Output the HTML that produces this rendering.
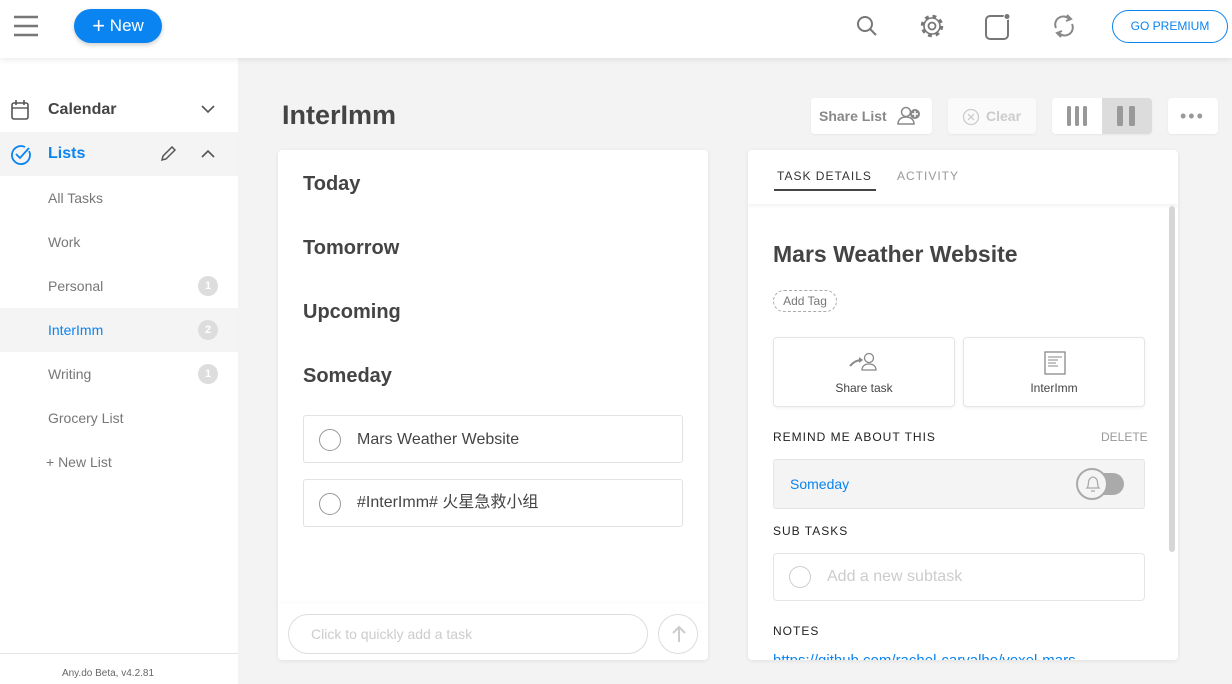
<!DOCTYPE html>
<html><head><meta charset="utf-8"><style>
*{box-sizing:border-box;margin:0;padding:0}
body{width:1232px;height:684px;overflow:hidden;background:#f3f3f3;font-family:"Liberation Sans","Noto Sans CJK SC",sans-serif;position:relative;color:#444}
.a{position:absolute}
.top{left:0;top:0;width:1232px;height:58px;background:#fff;box-shadow:0 2px 6px rgba(0,0,0,.08);z-index:2}
.side{left:0;top:58px;width:238px;height:626px;background:#fff}
.item{position:absolute;left:48px;font-size:14px;color:#777}
.badge{position:absolute;left:198px;width:20px;height:20px;border-radius:50%;background:#ddd;color:#fff;font-size:11px;text-align:center;line-height:20px;font-weight:bold}
.card{background:#fff;border-radius:4px;box-shadow:0 1px 4px rgba(0,0,0,.08)}
.sec{position:absolute;left:25px;font-size:20px;font-weight:bold;color:#444}
.task{position:absolute;left:25px;width:380px;height:48px;border:1px solid #e2e2e2;border-radius:3px;font-size:16px;color:#444}
.task i{position:absolute;left:15px;top:13px;width:22px;height:22px;border:1px solid #999;border-radius:50%}
.task span{position:absolute;left:53px;top:14px;line-height:20px}
.lbl{position:absolute;font-size:12px;letter-spacing:1px;color:#222}
.btn{position:absolute;background:#fff;border-radius:4px;box-shadow:0 1px 2px rgba(0,0,0,.05)}
</style></head><body>
<div class="a top">
 <svg class="a" style="left:13px;top:15px" width="26" height="22"><g stroke="#777" stroke-width="2.5"><line x1="1" y1="2" x2="25" y2="2"/><line x1="1" y1="11" x2="25" y2="11"/><line x1="1" y1="20" x2="25" y2="20"/></g></svg>
 <div class="a" style="left:74px;top:9px;width:88px;height:34px;border-radius:17px;background:#0a84f0;color:#fff;font-size:17px;line-height:34px;text-align:center;box-shadow:0 2px 5px rgba(0,0,0,.2)"><span style="font-size:22px;vertical-align:-2px">+</span> New</div>
 <svg class="a" style="left:856px;top:15px" width="22" height="22"><circle cx="9" cy="9" r="7" fill="none" stroke="#777" stroke-width="2"/><line x1="14" y1="14" x2="20" y2="20" stroke="#777" stroke-width="2"/></svg>
 <svg class="a" style="left:919px;top:13px" width="26" height="26" viewBox="0 0 26 26"><circle cx="13" cy="13" r="9.5" fill="none" stroke="#777" stroke-width="3.5" stroke-dasharray="3.7 3.8"/><circle cx="13" cy="13" r="8" fill="#fff" stroke="#777" stroke-width="1.6"/><circle cx="13" cy="13" r="3.5" fill="none" stroke="#777" stroke-width="1.8"/></svg>
 <svg class="a" style="left:984px;top:13px" width="28" height="28"><rect x="2" y="3" width="22" height="23" rx="4" fill="none" stroke="#777" stroke-width="2"/><circle cx="23" cy="3.5" r="3.5" fill="#fff"/><circle cx="23" cy="3.5" r="2.5" fill="#777"/></svg>
 <svg class="a" style="left:1052px;top:13px" width="24" height="26" viewBox="0 0 24 26"><path d="M4 15A8 8 0 0 1 17 6" fill="none" stroke="#888" stroke-width="2"/><path d="M15 2l4 4-5 2" fill="none" stroke="#888" stroke-width="2"/><path d="M20 11A8 8 0 0 1 7 20" fill="none" stroke="#888" stroke-width="2"/><path d="M9 24l-4-4 5-2" fill="none" stroke="#888" stroke-width="2"/></svg>
 <div class="a" style="left:1112px;top:10px;width:116px;height:33px;border:1px solid #0a84f0;border-radius:17px;color:#0a84f0;font-size:12px;line-height:31px;text-align:center">GO PREMIUM</div>
</div>
<div class="a side">
 <svg class="a" style="left:11px;top:42px" width="18" height="20"><rect x="1" y="3" width="16" height="16" rx="2" fill="none" stroke="#555" stroke-width="1.6"/><line x1="1" y1="8" x2="17" y2="8" stroke="#555" stroke-width="1.4"/><line x1="5" y1="0" x2="5" y2="5" stroke="#555" stroke-width="1.6"/><line x1="13" y1="0" x2="13" y2="5" stroke="#555" stroke-width="1.6"/></svg>
 <div class="a" style="left:48px;top:43px;font-size:16px;font-weight:bold;color:#444">Calendar</div>
 <svg class="a" style="left:201px;top:47px" width="14" height="9"><path d="M1 1l6 6 6-6" fill="none" stroke="#555" stroke-width="1.6"/></svg>
 <div class="a" style="left:0;top:74px;width:238px;height:44px;background:#f4f4f4"></div>
 <svg class="a" style="left:10px;top:86px" width="22" height="22"><path d="M19 7A9 9 0 1 1 15 3" fill="none" stroke="#0a84f0" stroke-width="1.8"/><path d="M6 10l4 4 9-10" fill="none" stroke="#0a84f0" stroke-width="1.8"/></svg>
 <div class="a" style="left:48px;top:87px;font-size:16px;font-weight:bold;color:#0a84f0">Lists</div>
 <svg class="a" style="left:160px;top:88px" width="16" height="16"><path d="M2 14l1-4 9-9 3 3-9 9z" fill="none" stroke="#555" stroke-width="1.5"/></svg>
 <svg class="a" style="left:201px;top:91px" width="14" height="9"><path d="M1 8l6-6 6 6" fill="none" stroke="#555" stroke-width="1.6"/></svg>
 <div class="item" style="top:132px">All Tasks</div>
 <div class="item" style="top:176px">Work</div>
 <div class="item" style="top:220px">Personal</div><div class="badge" style="top:218px">1</div>
 <div class="a" style="left:0;top:250px;width:238px;height:44px;background:#f4f4f4"></div>
 <div class="item" style="top:264px;color:#0a84f0">InterImm</div><div class="badge" style="top:262px">2</div>
 <div class="item" style="top:308px">Writing</div><div class="badge" style="top:306px">1</div>
 <div class="item" style="top:352px">Grocery List</div>
 <div class="item" style="top:396px;left:46px">+ New List</div>
 <div class="a" style="left:0;top:595px;width:238px;border-top:1px solid #e5e5e5"></div>
 <div class="a" style="left:0;top:610px;width:216px;text-align:center;font-size:10px;color:#666">Any.do Beta, v4.2.81</div>
</div>
<div class="a" style="left:282px;top:100px;font-size:27px;font-weight:bold;color:#444">InterImm</div>
<div class="btn" style="left:811px;top:98px;width:121px;height:36px"><span class="a" style="left:8px;top:10px;font-size:14px;color:#888;font-weight:bold">Share List</span>
<svg class="a" style="left:86px;top:8px" width="26" height="20"><circle cx="9" cy="6" r="4.5" fill="none" stroke="#888" stroke-width="1.5"/><path d="M1 18c0-5 4-7 8-7s8 2 8 7z" fill="none" stroke="#888" stroke-width="1.5"/><circle cx="18" cy="8" r="5" fill="#888"/><path d="M18 5v6M15 8h6" stroke="#fff" stroke-width="1.5"/></svg></div>
<div class="btn" style="left:948px;top:98px;width:88px;height:36px;background:#fafafa"><svg class="a" style="left:14px;top:10px" width="18" height="18"><circle cx="9" cy="9" r="7.5" fill="none" stroke="#ccc" stroke-width="1.3"/><path d="M6 6l6 6M12 6l-6 6" stroke="#ccc" stroke-width="1.3"/></svg><span class="a" style="left:38px;top:10px;font-size:14px;font-weight:bold;color:#ccc">Clear</span></div>
<div class="btn" style="left:1052px;top:98px;width:100px;height:36px;overflow:hidden"><div class="a" style="left:50px;top:0;width:50px;height:36px;background:#dcdcdc"></div>
<svg class="a" style="left:14px;top:8px" width="24" height="20"><rect x="1" y="0" width="4" height="20" rx="1.5" fill="#999"/><rect x="9" y="0" width="4" height="20" rx="1.5" fill="#999"/><rect x="17" y="0" width="4" height="20" rx="1.5" fill="#999"/></svg>
<svg class="a" style="left:64px;top:8px" width="24" height="20"><rect x="1" y="0" width="6" height="20" rx="1.5" fill="#999"/><rect x="13" y="0" width="6" height="20" rx="1.5" fill="#999"/></svg></div>
<div class="btn" style="left:1168px;top:98px;width:50px;height:36px"><span class="a" style="left:12px;top:8px;font-size:18px;color:#999;letter-spacing:2px">•••</span></div>

<div class="a card" style="left:278px;top:150px;width:430px;height:510px">
 <div class="sec" style="top:23px">Today</div>
 <div class="sec" style="top:87px">Tomorrow</div>
 <div class="sec" style="top:151px">Upcoming</div>
 <div class="sec" style="top:215px">Someday</div>
 <div class="task" style="top:265px"><i></i><span>Mars Weather Website</span></div>
 <div class="task" style="top:329px"><i></i><span style="top:13px">#InterImm# 火星急救小组</span></div>
 <div class="a" style="left:0;top:455px;width:430px;height:1px;box-shadow:0 -2px 6px rgba(0,0,0,.08)"></div>
 <div class="a" style="left:10px;top:464px;width:360px;height:40px;border:1px solid #ddd;border-radius:20px;font-size:14px;color:#ccc;padding:11px 0 0 22px">Click to quickly add a task</div>
 <div class="a" style="left:380px;top:464px;width:40px;height:40px;border:1px solid #ddd;border-radius:50%"><svg class="a" style="left:11px;top:10px" width="18" height="18"><path d="M9 17V2M3 8l6-6 6 6" fill="none" stroke="#ccc" stroke-width="2"/></svg></div>
</div>

<div class="a card" style="left:748px;top:150px;width:430px;height:510px;overflow:hidden">
 <div class="a" style="left:0;top:0;width:430px;height:54px;box-shadow:0 2px 4px rgba(0,0,0,.06)"></div>
 <div class="a" style="left:29px;top:19px;font-size:12px;letter-spacing:1px;color:#333">TASK DETAILS</div>
 <div class="a" style="left:26px;top:39px;width:102px;height:2px;background:#444"></div>
 <div class="a" style="left:149px;top:19px;font-size:12px;letter-spacing:1px;color:#999">ACTIVITY</div>
 <div class="a" style="left:421px;top:56px;width:6px;height:346px;border-radius:3px;background:#d6d6d6"></div>
 <div class="a" style="left:25px;top:91px;font-size:23px;font-weight:bold;color:#444">Mars Weather Website</div>
 <div class="a" style="left:25px;top:140px;width:64px;height:22px;border:1px dashed #aaa;border-radius:11px;font-size:12px;color:#777;text-align:center;line-height:20px">Add Tag</div>
 <div class="a" style="left:25px;top:187px;width:182px;height:70px;border:1px solid #e5e5e5;border-radius:4px;box-shadow:0 1px 3px rgba(0,0,0,.06)">
  <svg class="a" style="left:75px;top:14px" width="30" height="20"><circle cx="20" cy="6" r="4.5" fill="none" stroke="#888" stroke-width="1.3"/><path d="M13 18c0-4 3-6 7-6s7 2 7 6z" fill="none" stroke="#888" stroke-width="1.3"/><path d="M1 14c4-5 8-6 12-6" stroke="#888" stroke-width="2" fill="none"/><path d="M10 5l4 3-4 3z" fill="#888"/></svg>
  <div class="a" style="left:0;top:43px;width:180px;text-align:center;font-size:12px;color:#444">Share task</div></div>
 <div class="a" style="left:215px;top:187px;width:182px;height:70px;border:1px solid #e5e5e5;border-radius:4px;box-shadow:0 1px 3px rgba(0,0,0,.06)">
  <svg class="a" style="left:80px;top:13px" width="22" height="24"><rect x="1" y="1" width="20" height="22" fill="none" stroke="#888" stroke-width="1.3"/><path d="M4 6h14M4 9h10M4 12h8M4 15h10" stroke="#888" stroke-width="1"/></svg>
  <div class="a" style="left:0;top:43px;width:180px;text-align:center;font-size:12px;color:#444">InterImm</div></div>
 <div class="lbl" style="left:25px;top:280px">REMIND ME ABOUT THIS</div>
 <div class="a" style="left:353px;top:280px;font-size:12px;color:#999">DELETE</div>
 <div class="a" style="left:25px;top:309px;width:372px;height:50px;background:#f4f4f4;border:1px solid #e5e5e5;border-radius:3px">
  <span class="a" style="left:16px;top:16px;font-size:14px;color:#0a84f0">Someday</span>
  <div class="a" style="left:312px;top:13px;width:38px;height:22px;border-radius:11px;background:#aaa"></div>
  <div class="a" style="left:302px;top:8px;width:32px;height:32px;border-radius:50%;background:#f4f4f4;border:2px solid #aaa"><svg class="a" style="left:7px;top:5px" width="16" height="19"><path d="M2 13c2-2 1-6 2-8s3-3 4-3 3 1 4 3 0 6 2 8zM6 16h4" fill="none" stroke="#aaa" stroke-width="1.3"/></svg></div>
 </div>
 <div class="lbl" style="left:25px;top:374px">SUB TASKS</div>
 <div class="a" style="left:25px;top:403px;width:372px;height:48px;border:1px solid #e5e5e5;border-radius:4px">
  <i class="a" style="left:15px;top:12px;width:22px;height:22px;border:1px solid #ccc;border-radius:50%"></i>
  <span class="a" style="left:53px;top:14px;font-size:16px;color:#ccc">Add a new subtask</span></div>
 <div class="lbl" style="left:25px;top:474px">NOTES</div>
 <div class="a" style="left:25px;top:502px;font-size:15px;color:#0a84f0;text-decoration:underline">https://github.com/rachel-carvalho/voxel-mars</div>
</div>
</body></html>
